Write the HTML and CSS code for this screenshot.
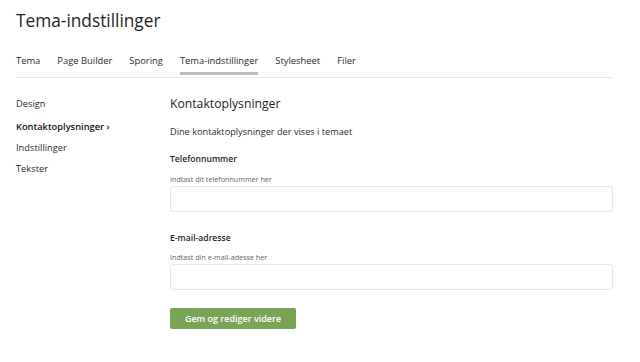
FILE: index.html
```html
<!DOCTYPE html>
<html lang="da">
<head>
    <meta charset="UTF-8">
    <meta name="viewport" content="width=device-width, initial-scale=1.0">
    <link rel="stylesheet" href="styles.css">
</head>
<body>
    <div class="page">
        <h1 class="title">Tema-indstillinger</h1>
        <nav class="tabs">
            <a href="#">Tema</a>
            <a href="#">Page Builder</a>
            <a href="#">Sporing</a>
            <a href="#" class="active">Tema-indstillinger</a>
            <a href="#">Stylesheet</a>
            <a href="#">Filer</a>
        </nav>
        <div class="layout">
            <div class="sidebar">
                <a href="#">Design</a>
                <a href="#" class="current">Kontaktoplysninger ›</a>
                <a href="#">Indstillinger</a>
                <a href="#">Tekster</a>
            </div>
            <div class="content">
                <h2>Kontaktoplysninger</h2>
                <p class="intro">Dine kontaktoplysninger der vises i temaet</p>
                <div class="field">
                    <h3>Telefonnummer</h3>
                    <label>Indtast dit telefonnummer her</label>
                    <input type="text" />
                </div>
                <div class="field">
                    <h3>E-mail-adresse</h3>
                    <label>Indtast din e-mail-adesse her</label>
                    <input type="text" />
                </div>
                <button class="save">Gem og rediger videre</button>
            </div>
        </div>
    </div>
</body>
</html>
```

FILE: styles.css
```css
:root {
    --text: #1f1f1f;
    --muted: #666;
    --line: #e6e6e6;
    --green: #78a455;
}

* {
    margin: 0;
    padding: 0;
    box-sizing: border-box;
    font-family: 'Open Sans', sans-serif;
}

body {
    background: #fff;
    color: var(--text);
}

.page {
    padding: 8px 27px 0 16px;
}

.title {
    font-size: 17.3px;
    font-weight: 400;
    line-height: 26px;
}

.tabs {
    display: flex;
    gap: 17px;
    margin-top: 20px;
    border-bottom: 1px solid var(--line);
}

.tabs a {
    font-size: 9.4px;
    line-height: 14px;
    color: #2b2b2b;
    text-decoration: none;
    padding-bottom: 4px;
    border-bottom: 3px solid transparent;
    margin-bottom: 2px;
}

.tabs a.active {
    border-bottom-color: #bdbdbd;
}

.layout {
    display: flex;
    padding-top: 16px;
}

.sidebar {
    width: 154px;
    padding-top: 2px;
    display: flex;
    flex-direction: column;
    gap: 6px;
}

.sidebar a {
    font-size: 9.3px;
    line-height: 15px;
    color: #2b2b2b;
    text-decoration: none;
}

.sidebar a:first-child {
    margin-bottom: 2px;
}

.sidebar a.current {
    font-weight: 600;
    color: #111;
}

.content {
    flex: 1;
}

.content h2 {
    font-size: 12.2px;
    font-weight: 400;
    line-height: 20px;
}

.intro {
    font-size: 9.2px;
    line-height: 15px;
    color: #2b2b2b;
    margin-top: 9.5px;
}

.field {
    margin-top: 13.5px;
}

.field + .field {
    margin-top: 19px;
}

.field h3 {
    font-size: 8.6px;
    font-weight: 600;
    line-height: 14px;
}

.field label {
    display: block;
    font-size: 7.2px;
    line-height: 10px;
    color: var(--muted);
    margin-top: 7.5px;
}

.field input {
    display: block;
    width: 100%;
    height: 26px;
    margin-top: 2px;
    border: 1px solid var(--line);
    border-radius: 3px;
}

.save {
    margin-top: 18px;
    width: 126px;
    height: 21px;
    background: var(--green);
    color: #fff;
    border: none;
    border-radius: 2px;
    font-size: 9px;
    font-weight: 600;
}
```
